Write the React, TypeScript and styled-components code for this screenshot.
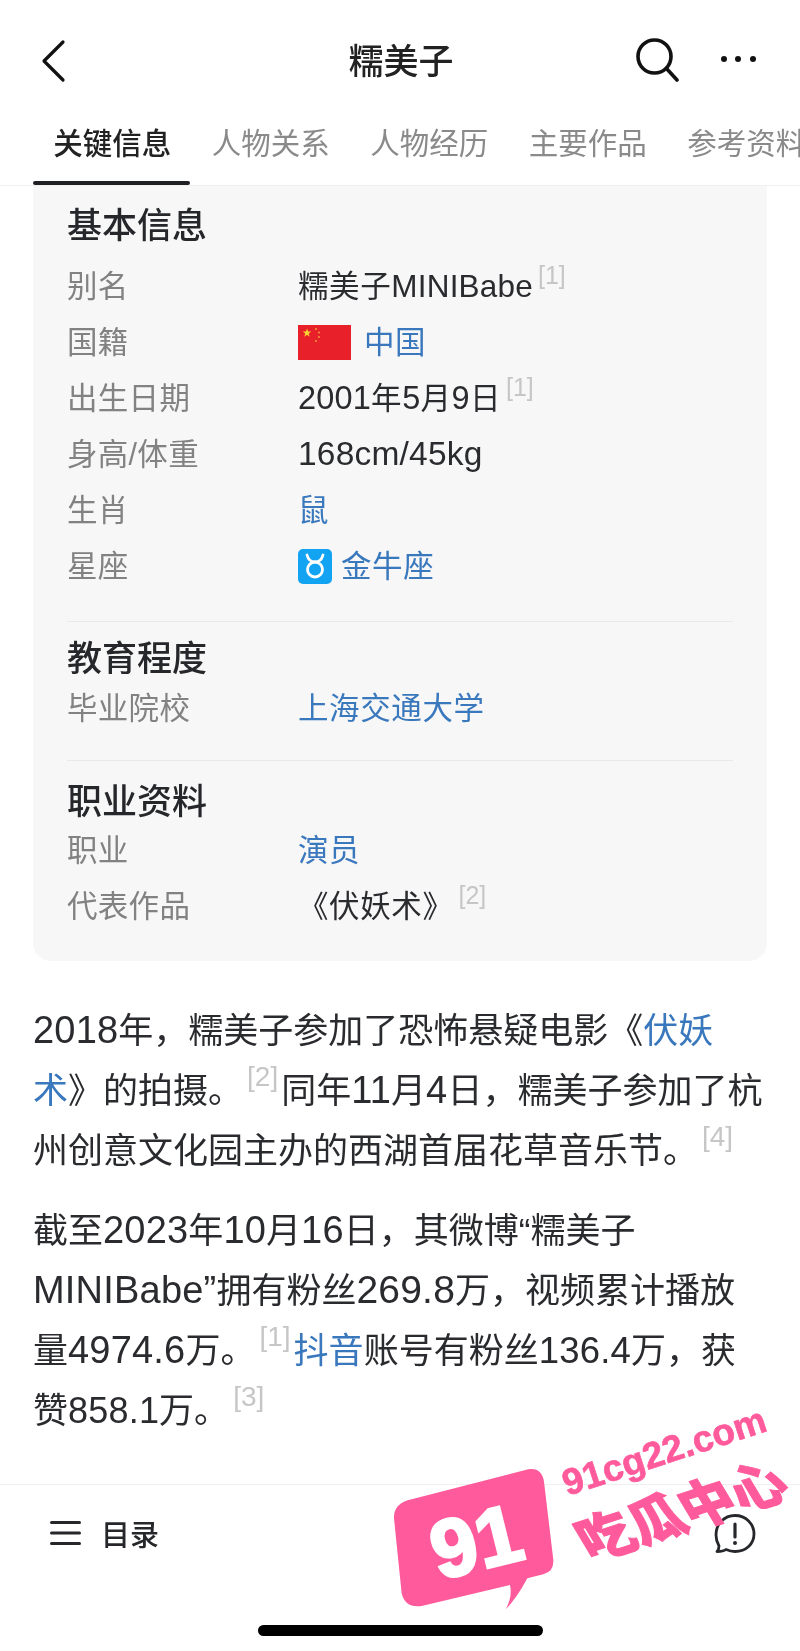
import React from "react";
import styled, { createGlobalStyle } from "styled-components";

const Global = createGlobalStyle`
  html, body { margin: 0; padding: 0; background: #fff; }
  body { font-family: "Liberation Sans", "Noto Sans CJK SC", sans-serif; color: #2a2b2e; }
`;

const Page = styled.div`
  position: relative;
  width: 800px;
  height: 1651px;
  overflow: hidden;
  background: #fff;
  filter: blur(0.4px);
`;

const TopBar = styled.header`
  height: 122px;
  display: grid;
  grid-template-columns: 1fr auto 1fr;
  align-items: center;
  padding: 0 44px 0 40px;
  box-sizing: border-box;
`;

const Title = styled.h1`
  margin: 2px 0 0 6px;
  font-size: 35px;
  font-weight: 500;
  line-height: 44px;
  color: #222;
`;

const Actions = styled.div`
  display: flex;
  justify-content: flex-end;
  align-items: center;
  gap: 41px;
`;

const IconSvg = styled.svg`
  display: block;
  flex: none;
`;

const Tabs = styled.nav`
  height: 64px;
  display: flex;
  padding-left: 33px;
  border-bottom: 1px solid #efefef;
  box-sizing: border-box;
  overflow: hidden;
`;

const Tab = styled.div<{ $active?: boolean }>`
  position: relative;
  flex: none;
  width: 158.5px;
  padding-top: 1px;
  box-sizing: border-box;
  text-align: center;
  font-size: 29.5px;
  line-height: 42px;
  color: ${(p) => (p.$active ? "#222" : "#8a8a8a")};
  font-weight: ${(p) => (p.$active ? 500 : 400)};
  &::after {
    content: "";
    display: ${(p) => (p.$active ? "block" : "none")};
    position: absolute;
    left: 0;
    right: 2px;
    bottom: 0;
    height: 4px;
    border-radius: 2px;
    background: #1f2024;
  }
`;

const Card = styled.section`
  margin: 0 33px;
  background: #f7f7f7;
  border-radius: 0 0 18px 18px;
  padding: 0 34px;
`;

const Group = styled.div<{ $top: number; $gap: number; $bottom: number; $line?: boolean }>`
  padding: ${(p) => p.$top}px 0 ${(p) => p.$bottom}px;
  border-bottom: ${(p) => (p.$line ? "1px solid #e9e9e9" : "none")};
  h2 {
    margin: 0 0 ${(p) => p.$gap}px;
  }
`;

const Heading = styled.h2`
  font-size: 35px;
  line-height: 40px;
  font-weight: 500;
  color: #26272a;
`;

const Row = styled.div`
  display: grid;
  grid-template-columns: 231px 1fr;
  height: 56px;
  padding-bottom: 4px;
  box-sizing: border-box;
  align-items: center;
  font-size: 30.5px;
  line-height: 40px;
`;

const Label = styled.div`
  color: #828282;
  letter-spacing: 0.3px;
`;

const Value = styled.div`
  white-space: nowrap;
  color: #2a2b2e;
  letter-spacing: 0.6px;
`;

const IconValue = styled(Value)`
  display: flex;
  align-items: center;
`;

const Link = styled.span`
  color: #3a78bd;
`;

const Num = styled.span<{ $z?: number }>`
  font-size: ${(p) => p.$z ?? 38}px;
  line-height: 0;
  letter-spacing: 0.2px;
`;

const Sup = styled.sup`
  font-size: 28px;
  line-height: 0;
  color: #c6c6c6;
  font-weight: 300;
  vertical-align: 17px;
  margin: 0 3px 0 4px;
  letter-spacing: 0;
`;

const RowSup = styled(Sup)`
  font-size: 25px;
  vertical-align: 13px;
  margin: 0 0 0 5px;
`;

const Article = styled.article`
  padding: 40px 33px 0;
`;

const Para = styled.p`
  margin: 0 0 20px;
  font-size: 35px;
  line-height: 60px;
  white-space: nowrap;
  color: #2a2b2e;
`;

const Footer = styled.footer`
  position: absolute;
  left: 0;
  right: 0;
  bottom: 0;
  height: 167px;
  border-top: 1px solid #efefef;
  box-sizing: border-box;
  display: flex;
  flex-direction: column;
  align-items: center;
`;

const FootBar = styled.div`
  align-self: stretch;
  height: 96px;
  display: flex;
  align-items: center;
  justify-content: space-between;
  padding: 0 44px 0 50px;
`;

const Menu = styled.div`
  display: flex;
  align-items: center;
  gap: 20px;
  font-size: 29px;
  font-weight: 500;
  color: #26272a;
`;

const HomeBar = styled.div`
  width: 285px;
  height: 11px;
  margin-top: 44px;
  border-radius: 6px;
  background: #000;
`;

const Watermark = styled.svg`
  position: absolute;
  left: 340px;
  top: 1390px;
  width: 460px;
  height: 261px;
  overflow: visible;
`;

const Flag = () => (
  <IconSvg width="53" height="35" viewBox="0 0 53 35">
    <rect width="53" height="35" fill="#e8202a" />
    <polygon points="9,3.5 10.06,6.54 13.28,6.61 10.71,8.56 11.65,11.64 9,9.8 6.35,11.64 7.29,8.56 4.72,6.61 7.94,6.54" fill="#f7d631" />
    <circle cx="18" cy="4" r="0.9" fill="#f2a63a" />
    <circle cx="21" cy="7.5" r="0.9" fill="#f2a63a" />
    <circle cx="21" cy="12" r="0.9" fill="#f2a63a" />
    <circle cx="18" cy="16" r="0.9" fill="#f2a63a" />
  </IconSvg>
);

const FlagBox = styled.span`
  margin-right: 13px;
`;

const TaurusBox = styled.span`
  margin-right: 9px;
`;

const Taurus = () => (
  <IconSvg width="34" height="35" viewBox="0 0 34 35">
    <rect width="34" height="35" rx="5" fill="#12a3f3" />
    <circle cx="17" cy="20.5" r="7.5" fill="none" stroke="#fff" strokeWidth="2.8" />
    <path d="M9 6c1 4 4 7 8 7s7-3 8-7" fill="none" stroke="#fff" strokeWidth="2.8" strokeLinecap="round" />
  </IconSvg>
);

export default function App() {
  return (
    <Page>
      <Global />
      <TopBar>
        <IconSvg width="30" height="44" viewBox="0 0 30 44">
          <path d="M23 3 4 22l19 19" fill="none" stroke="#111" strokeWidth="3.2" strokeLinecap="round" strokeLinejoin="round" />
        </IconSvg>
        <Title>糯美子</Title>
        <Actions>
          <IconSvg width="46" height="46" viewBox="0 0 46 46">
            <circle cx="21.5" cy="18.5" r="16.5" fill="none" stroke="#111" strokeWidth="3.6" />
            <path d="M33.5 30.5 44 42" fill="none" stroke="#111" strokeWidth="3.6" strokeLinecap="round" />
          </IconSvg>
          <IconSvg width="36" height="12" viewBox="0 0 36 12">
            <circle cx="4" cy="4" r="3" fill="#111" />
            <circle cx="18" cy="4" r="3" fill="#111" />
            <circle cx="33" cy="4" r="3" fill="#111" />
          </IconSvg>
        </Actions>
      </TopBar>
      <Tabs>
        <Tab $active>关键信息</Tab>
        <Tab>人物关系</Tab>
        <Tab>人物经历</Tab>
        <Tab>主要作品</Tab>
        <Tab>参考资料</Tab>
      </Tabs>
      <Card>
        <Group $top={20} $gap={14} $bottom={25} $line>
          <Heading>基本信息</Heading>
          <Row><Label>别名</Label><Value>糯美子<Num $z={31.5}>MINIBabe</Num><RowSup>[1]</RowSup></Value></Row>
          <Row><Label>国籍</Label><IconValue><FlagBox><Flag /></FlagBox><Link>中国</Link></IconValue></Row>
          <Row><Label>出生日期</Label><Value><Num $z={32.5}>2001</Num>年<Num $z={32.5}>5</Num>月<Num $z={32.5}>9</Num>日<RowSup>[1]</RowSup></Value></Row>
          <Row><Label>身高/体重</Label><Value><Num $z={33.5}>168cm/45kg</Num></Value></Row>
          <Row><Label>生肖</Label><Value><Link>鼠</Link></Value></Row>
          <Row><Label>星座</Label><IconValue><TaurusBox><Taurus /></TaurusBox><Link>金牛座</Link></IconValue></Row>
        </Group>
        <Group $top={17} $gap={3} $bottom={22} $line>
          <Heading>教育程度</Heading>
          <Row><Label>毕业院校</Label><Value><Link>上海交通大学</Link></Value></Row>
        </Group>
        <Group $top={21} $gap={2} $bottom={25}>
          <Heading>职业资料</Heading>
          <Row><Label>职业</Label><Value><Link>演员</Link></Value></Row>
          <Row><Label>代表作品</Label><Value>《伏妖术》<RowSup>[2]</RowSup></Value></Row>
        </Group>
      </Card>
      <Article>
        <Para>
          <Num>2018</Num>年，糯美子参加了恐怖悬疑电影《<Link>伏妖</Link><br />
          <Link>术</Link>》的拍摄。<Sup>[2]</Sup>同年<Num>11</Num>月<Num>4</Num>日，糯美子参加了杭<br />
          州创意文化园主办的西湖首届花草音乐节。<Sup>[4]</Sup>
        </Para>
        <Para>
          截至<Num>2023</Num>年<Num>10</Num>月<Num>16</Num>日，其微博“糯美子<br />
          <Num $z={38}>MINIBabe”</Num>拥有粉丝<Num $z={39}>269.8</Num>万，视频累计播放<br />
          量<Num>4974.6</Num>万。<Sup>[1]</Sup><Link>抖音</Link>账号有粉丝<Num $z={36.5}>136.4</Num>万，获<br />
          赞<Num $z={36}>858.1</Num>万。<Sup>[3]</Sup>
        </Para>
      </Article>
      <Footer>
        <FootBar>
          <Menu>
            <IconSvg width="31" height="26" viewBox="0 0 31 26">
              <path d="M1.5 2.5h28M1.5 13h28M1.5 23.5h28" stroke="#26272a" strokeWidth="3" strokeLinecap="round" />
            </IconSvg>
            目录
          </Menu>
          <IconSvg width="42" height="40" viewBox="0 0 42 40">
            <path d="M5 33c-2-3.500-3-7-3-11C2 11 10 2.500 21 2.500S40 11 40 21 32 38.500 21 38.500c-3.500 0-6-.7-9-2-2 1.500-5 2-9 2 1-1 2-3 2-5.500Z" fill="none" stroke="#26272a" strokeWidth="2.8" strokeLinejoin="round" />
            <path d="M21 11v13" stroke="#26272a" strokeWidth="3.2" strokeLinecap="round" />
            <circle cx="21" cy="30" r="2" fill="#26272a" />
          </IconSvg>
        </FootBar>
        <HomeBar />
      </Footer>
      <Watermark viewBox="0 0 1380 783">
        <path d="M215 328 565 238Q605 232 612 275L640 510Q642 545 610 553L562 565Q530 625 497 658 518 620 510 585L245 648Q195 655 185 610L162 385Q160 340 215 328Z" fill="#ff5a9b" />
        <text transform="translate(297 570) rotate(-14)" fontFamily="Liberation Sans" fontWeight="700" fontSize="245" fill="#fff" stroke="#fff" strokeWidth="9">91</text>
        <text transform="translate(682 318) rotate(-18)" fontFamily="Liberation Sans" fontWeight="700" fontSize="111" fill="#ff5a9b" stroke="#ff5a9b" strokeWidth="2">91cg22.com</text>
        <text transform="translate(752 514) rotate(-18) skewX(13)" fontFamily="Noto Sans CJK SC" fontWeight="900" fontSize="160" fill="#ff5a9b" stroke="#ff5a9b" strokeWidth="3">吃瓜中心</text>
      </Watermark>
    </Page>
  );
}
